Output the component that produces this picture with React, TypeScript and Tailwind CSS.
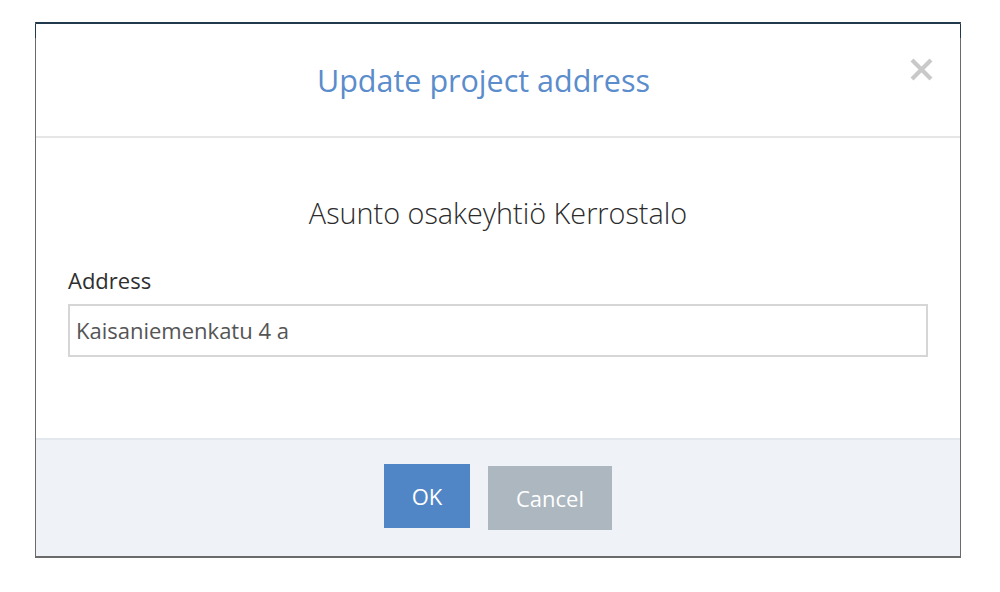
import { useState } from "react";

export default function App() {
  const [address, setAddress] = useState("Kaisaniemenkatu 4 a");

  return (
    <div
      className="h-[592px] w-[1000px] bg-white pt-[22px] pl-[35px]"
      style={{ fontFamily: '"Open Sans", "Noto Sans", sans-serif' }}
    >
      <div className="relative flex w-[926px] flex-col border-x border-t-2 border-b-2 border-x-[#6b6b6b] border-t-[#21394d] border-b-[#6b6b6b] bg-white">
        <span className="absolute -left-px top-0 h-[14px] w-px bg-[#21394d]" />
        <span className="absolute -right-px top-0 h-[14px] w-px bg-[#21394d]" />

        <header className="relative flex h-[114px] items-center justify-center border-b-2 border-[#e6e6e6] pr-[29px]">
          <h1 className="text-[30.5px] leading-none text-[#5b8ccb]">
            Update project address
          </h1>
          <button
            type="button"
            aria-label="Close"
            className="absolute right-[26px] top-[33px] h-[25px] w-[25px] text-[#c9c9c9]"
          >
            <svg viewBox="0 0 25 25" className="h-full w-full">
              <path
                d="M3 3 L22 22 M22 3 L3 22"
                stroke="currentColor"
                strokeWidth="4.2"
                strokeLinecap="butt"
              />
            </svg>
          </button>
        </header>

        <div className="flex h-[300px] flex-col px-8 pt-[61px]">
          <p className="text-center text-[28.8px] font-light leading-none text-[#2b2b2b]">
            Asunto osakeyhtiö Kerrostalo
          </p>
          <label className="mt-[41px] block text-[22px] leading-none text-[#2f2f2f]">
            Address
          </label>
          <input
            value={address}
            onChange={(e) => setAddress(e.target.value)}
            className="mt-[13px] h-[53px] w-full border-2 border-[#d6d6d6] px-[6px] text-[22px] text-[#555] outline-none"
          />
        </div>

        <footer className="flex h-[118px] justify-center gap-[18px] border-t-2 border-[#e3e8ef] bg-[#eff2f7] pt-[24px]">
          <button
            type="button"
            className="h-[64px] w-[86px] bg-[#5186c6] text-[22px] text-white"
          >
            OK
          </button>
          <button
            type="button"
            className="mt-[2px] h-[64px] w-[124px] bg-[#acb7bf] text-[22px] text-white"
          >
            Cancel
          </button>
        </footer>
      </div>
    </div>
  );
}
